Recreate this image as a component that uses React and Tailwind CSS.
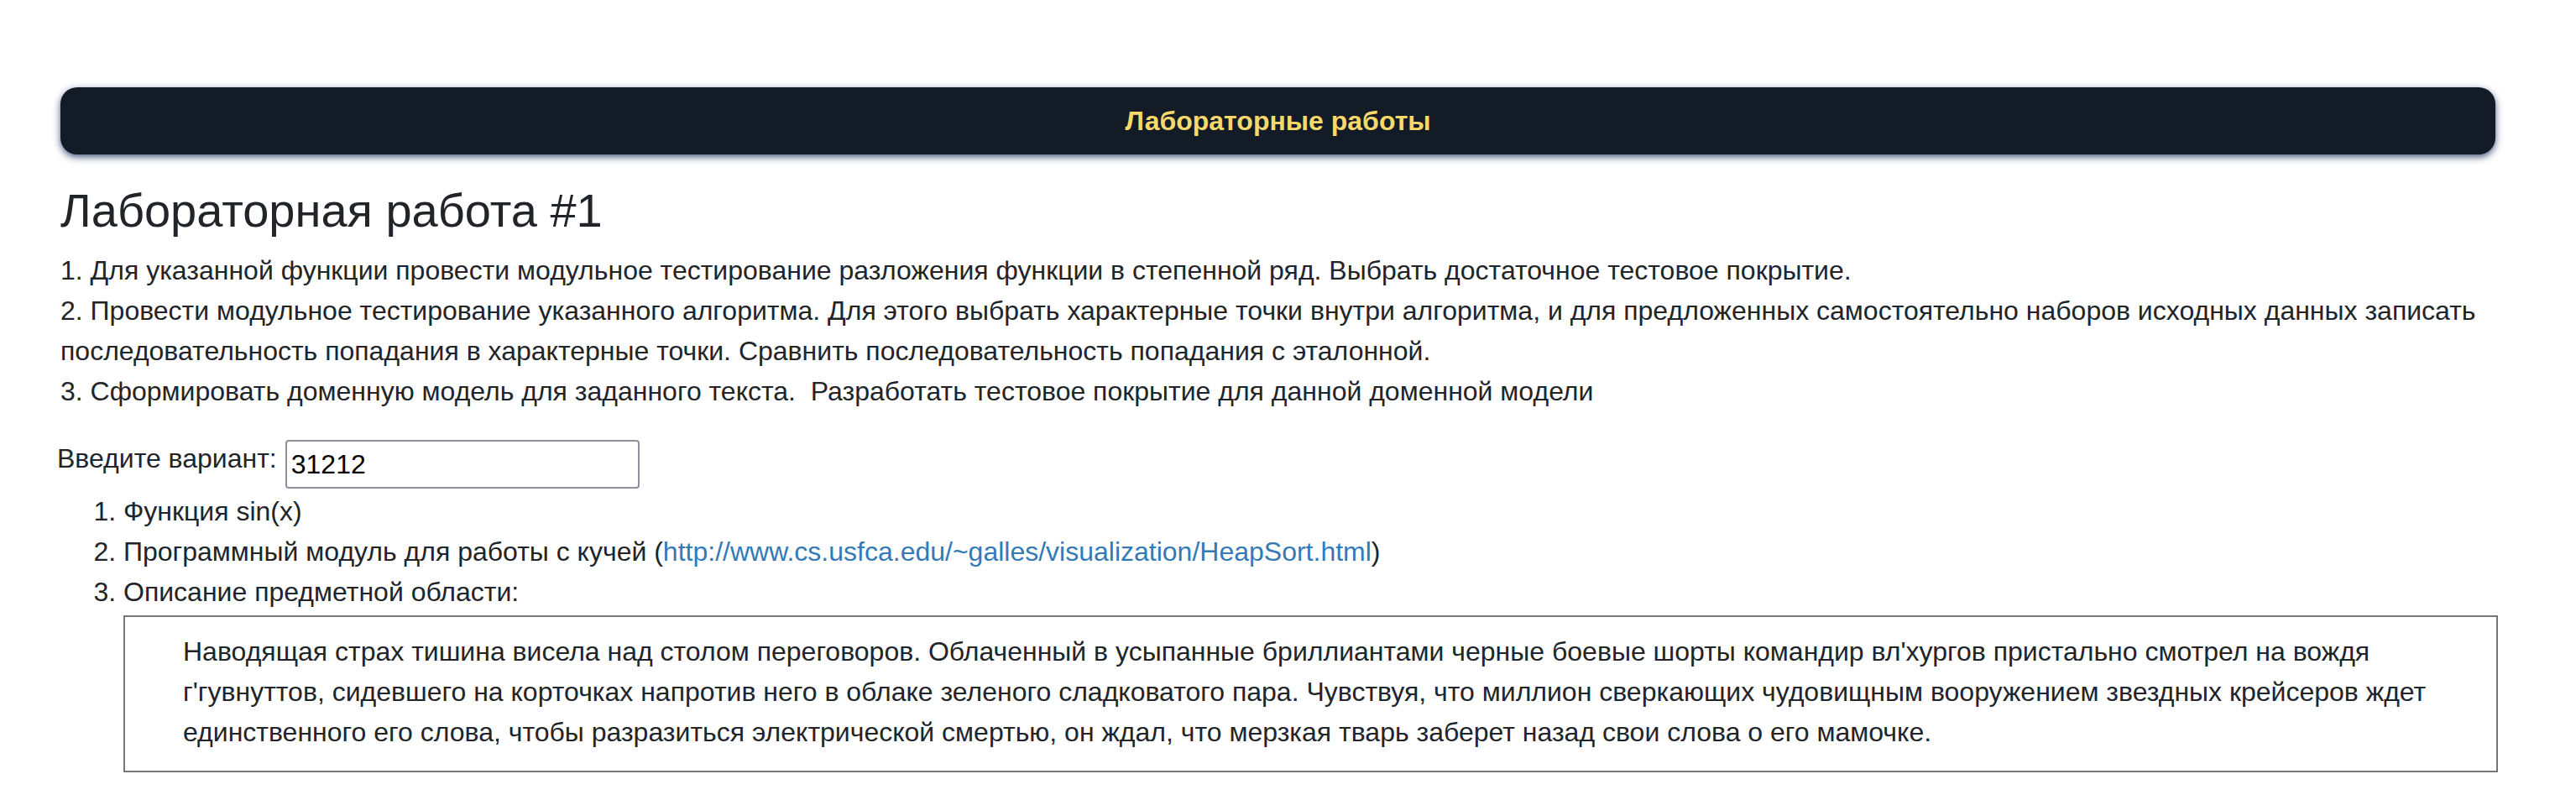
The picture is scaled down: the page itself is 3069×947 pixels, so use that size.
export default function App() {
  const story =
    "Наводящая страх тишина висела над столом переговоров. Облаченный в усыпанные бриллиантами черные боевые шорты командир вл'хургов пристально смотрел на вождя г'гувнуттов, сидевшего на корточках напротив него в облаке зеленого сладковатого пара. Чувствуя, что миллион сверкающих чудовищным вооружением звездных крейсеров ждет единственного его слова, чтобы разразиться электрической смертью, он ждал, что мерзкая тварь заберет назад свои слова о его мамочке.";

  return (
    <div className="min-h-[947px] bg-white font-['Liberation_Sans',Arial,sans-serif] text-[#212529]">
      <div className="ml-[72px] w-[2904px] pt-[104px]">
        {/* top bar */}
        <div className="flex h-[80px] w-[2901px] items-center justify-center rounded-[20px] bg-[#131b27] shadow-[0_3px_9px_rgba(50,70,110,0.9)]">
          <span className="text-[32px] font-bold text-[#f7d96b]">Лабораторные работы</span>
        </div>

        <h2 className="mt-[33px] text-[56px] font-normal leading-[1.2]">Лабораторная работа #1</h2>

        <p className="mt-[14px] text-[32px] leading-[48px]">
          1. Для указанной функции провести модульное тестирование разложения функции в степенной ряд. Выбрать
          достаточное тестовое покрытие.
          <br />
          2. Провести модульное тестирование указанного алгоритма. Для этого выбрать характерные точки внутри
          алгоритма, и для предложенных самостоятельно наборов исходных данных записать последовательность попадания
          в характерные точки. Сравнить последовательность попадания с эталонной.
          <br />
          3. Сформировать доменную модель для заданного текста.{"\u00a0 "}Разработать тестовое покрытие для данной
          доменной модели
        </p>

        <div className="-ml-[4px] mt-[32px] flex items-start">
          <label className="text-[32px] leading-[48px]">Введите вариант:</label>
          <input
            defaultValue="31212"
            className="ml-[10px] mt-[2px] h-[58px] w-[422px] rounded-[4px] border-2 border-[#8f8f9d] px-[5px] text-[32px] text-black outline-none"
          />
        </div>

        <ol className="mt-[3px] list-decimal pl-[75px] text-[32px] leading-[48px]">
          <li>Функция sin(x)</li>
          <li>
            Программный модуль для работы с кучей (
            <a href="#" className="text-[#337ab7]">
              http://www.cs.usfca.edu/~galles/visualization/HeapSort.html
            </a>
            )
          </li>
          <li>
            Описание предметной области:
            <div className="mt-[4px] border-2 border-[#777777] pb-[22px] pl-[69px] pr-[60px] pt-[17px]">
              {story}
            </div>
          </li>
        </ol>
      </div>
    </div>
  );
}
